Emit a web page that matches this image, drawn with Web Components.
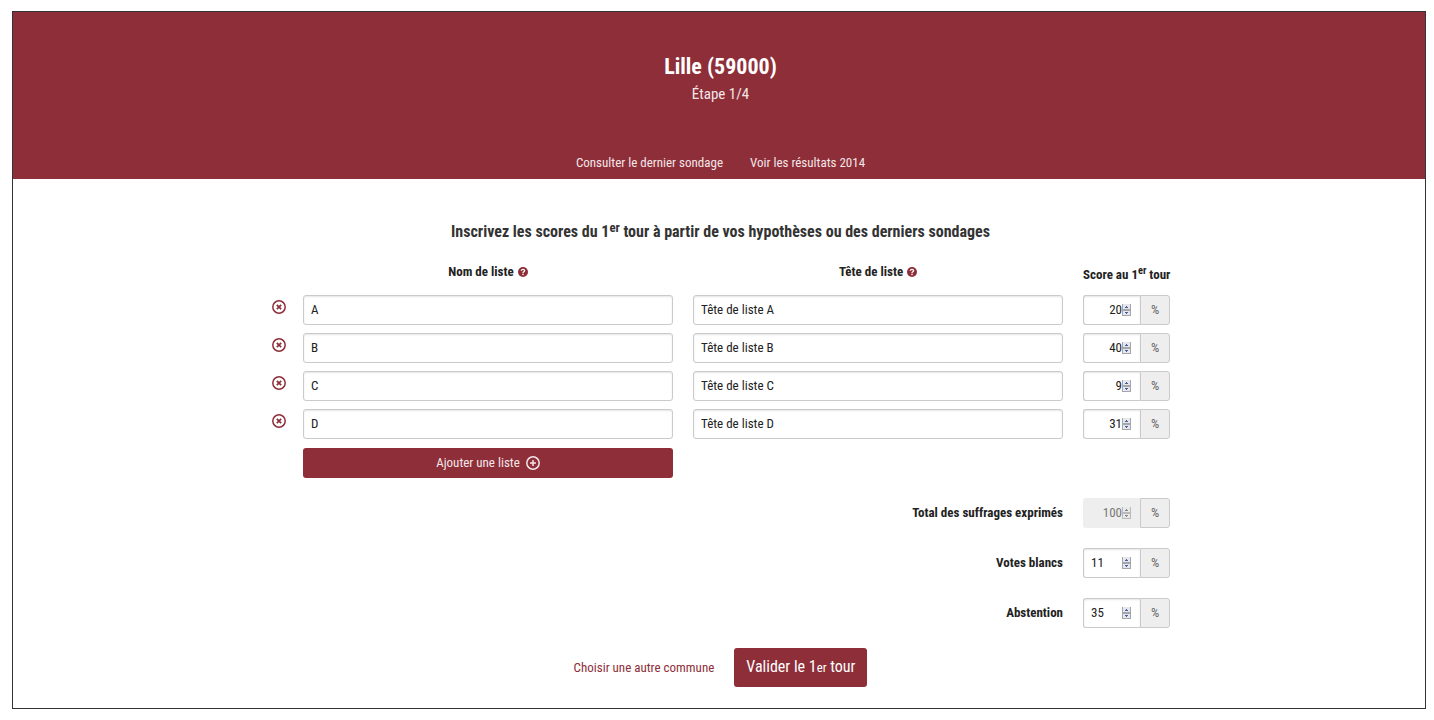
<!DOCTYPE html>
<html lang="fr">
<head>
<meta charset="utf-8">
<meta name="viewport" content="width=device-width, initial-scale=1">
<title>Lille (59000) - Étape 1/4</title>
<style>
  :root {
    --rouge: #8e2e39;
    --bordure: #cacaca;
  }
  body {
    margin: 11px 8px 11px 12px;
    background: #fff;
    color: #222;
    font-family: "Roboto Condensed", "Liberation Sans Narrow", Roboto, sans-serif;
    font-size: 13px;
    line-height: 20px;
  }
</style>
</head>
<body>
<app-simulateur>
  <app-entete slot="entete">
    <span slot="titre">Lille (59000)</span>
    <span slot="etape">Étape 1/4</span>
    <a slot="liens" href="#sondage">Consulter le dernier sondage</a>
    <a slot="liens" href="#resultats">Voir les résultats 2014</a>
  </app-entete>
  <app-formulaire></app-formulaire>
</app-simulateur>

<script>
// Crée le Shadow DOM à partir d'un gabarit HTML
function attacher(element, html) {
  const template = document.createElement('template');
  template.innerHTML = html;
  element.attachShadow({ mode: 'open' }).appendChild(template.content.cloneNode(true));
}

const base = `
  *, *::before, *::after { box-sizing: border-box; }
  input, button { font: inherit; color: inherit; margin: 0; }
  svg { display: block; }
  sup { font-size: 80%; line-height: 0; position: relative; top: -5px; vertical-align: baseline; }
`;

// Cadre général
class Simulateur extends HTMLElement {
  constructor() {
    super();
    attacher(this, `
      <style>
        ${base}
        :host { display: block; border: 1px solid #333; }
      </style>
      <slot name="entete"></slot>
      <main><slot></slot></main>
    `);
  }
}

class Entete extends HTMLElement {
  constructor() {
    super();
    attacher(this, `
      <style>
        ${base}
        :host { display: block; background: var(--rouge); color: #fefefe; }
        header {
          display: flex;
          flex-direction: column;
          align-items: center;
          padding: 40px 0 6px 3px;
        }
        h1 { margin: 0; font-size: 22px; line-height: 30px; }
        p { margin: 0; font-size: 15px; line-height: 24px; color: #f3e6e8; }
        nav { display: flex; gap: 27px; margin-top: 47px; }
        ::slotted(a) { color: #f3e6e8; text-decoration: none; }
      </style>
      <header>
        <h1><slot name="titre"></slot></h1>
        <p><slot name="etape"></slot></p>
        <nav><slot name="liens"></slot></nav>
      </header>
    `);
  }
}

// Pastille d'aide
class Aide extends HTMLElement {
  constructor() {
    super();
    attacher(this, `
      <style>
        :host { display: inline-block; width: 10px; height: 10px; color: var(--rouge); }
        svg { display: block; }
      </style>
      <svg width="10" height="10" viewBox="0 0 20 20" aria-hidden="true">
        <circle cx="10" cy="10" r="10" fill="currentColor"/>
        <path d="M6.6 7.6C6.6 3.6 13.4 3.8 13.2 7.5C13.1 9.6 10 9.6 10 12" fill="none" stroke="#fff" stroke-width="2.6"/>
        <rect x="8.6" y="13.4" width="2.8" height="2.8" fill="#fff"/>
      </svg>
    `);
  }
}

// Champ numérique suivi du signe %, avec un libellé facultatif
class Score extends HTMLElement {
  constructor() {
    super();
    const libelle = this.getAttribute('libelle');
    const bloque = this.hasAttribute('disabled');
    const visible = this.hasAttribute('visible');
    attacher(this, `
      <style>
        ${base}
        :host { display: flex; justify-content: flex-end; align-items: center; gap: 20px; }
        label { font-weight: bold; }
        .groupe { display: flex; width: 87px; height: 30px; }
        .champ {
          flex: 1;
          display: flex;
          align-items: center;
          min-width: 0;
          padding: 0 9px 0 7px;
          border: 1px solid var(--bordure);
          border-right: 0;
          border-radius: 3px 0 0 3px;
          background: #fff;
          box-shadow: inset 0 1px 2px rgba(10, 10, 10, 0.1);
        }
        input {
          flex: 1;
          min-width: 0;
          padding: 0;
          border: 0;
          outline: 0;
          background: none;
          text-align: right;
          appearance: textfield;
          -moz-appearance: textfield;
        }
        input::-webkit-inner-spin-button { appearance: none; -webkit-appearance: none; margin: 0; }
        :host([gauche]) input { text-align: left; }
        :host([disabled]) .champ { background: #eee; border-color: #eee; color: #777; box-shadow: none; }
        :host([disabled]) svg { filter: grayscale(1); opacity: 0.7; }
        .unite {
          width: 30px;
          border: 1px solid var(--bordure);
          border-radius: 0 3px 3px 0;
          background: #eee;
          color: #666;
          line-height: 28px;
          text-align: center;
        }
      </style>
      ${visible ? `<label for="valeur">${libelle}</label>` : ''}
      <div class="groupe">
        <div class="champ">
          <input id="valeur" type="number" value="${this.getAttribute('valeur')}"
            ${visible ? '' : `aria-label="${libelle}"`} ${bloque ? 'disabled' : ''}>
          <svg width="9" height="12" viewBox="0 0 9 12" shape-rendering="crispEdges" aria-hidden="true">
            <rect width="9" height="12" fill="#e6e7ea"/>
            <path d="M0 0H1V12H0ZM8 0H9V12H8ZM0 5H9V7H0ZM0 11H9V12H0Z" fill="#a3a6ab"/>
            <path d="M4 2H5V3H6V4H3V3H4ZM3 8H6V9H5V10H4V9H3Z" fill="#4a5da0"/>
          </svg>
        </div>
        <span class="unite">%</span>
      </div>
    `);
  }
}

// Une ligne de liste : suppression, nom, tête de liste, score
class Ligne extends HTMLElement {
  constructor() {
    super();
    const nom = this.getAttribute('nom');
    attacher(this, `
      <style>
        ${base}
        :host { display: grid; grid-template-columns: 32px minmax(0, 1fr); }
        button {
          justify-self: start;
          align-self: start;
          padding: 5px 1px;
          border: 0;
          background: none;
          color: var(--rouge);
          cursor: pointer;
        }
        .champs { display: grid; grid-template-columns: 1fr 1fr 87px; gap: 20px; }
        .texte {
          width: 100%;
          min-width: 0;
          height: 30px;
          padding: 0 7px 2px;
          border: 1px solid var(--bordure);
          border-radius: 3px;
          background: #fff;
          box-shadow: inset 0 1px 2px rgba(10, 10, 10, 0.1);
        }
      </style>
      <button type="button" aria-label="Supprimer la liste ${nom}">
        <svg width="14" height="14" viewBox="0 0 14 14" fill="none" stroke="currentColor" aria-hidden="true">
          <circle cx="7" cy="7" r="6.2" stroke-width="1.5"/>
          <path d="M4.8 4.8L9.2 9.2M9.2 4.8L4.8 9.2" stroke-width="1.7"/>
        </svg>
      </button>
      <div class="champs">
        <input class="texte" type="text" aria-label="Nom de liste" value="${nom}">
        <input class="texte" type="text" aria-label="Tête de liste" value="${this.getAttribute('tete')}">
        <app-score libelle="Score au 1er tour" valeur="${this.getAttribute('score')}"></app-score>
      </div>
    `);
  }
}

class Formulaire extends HTMLElement {
  constructor() {
    super();
    attacher(this, `
      <style>
        ${base}
        :host { display: block; padding: 41px 0 21px 3px; }
        form { max-width: 899px; margin: 0 auto; }
        h2 { margin: 0 0 18px; font-size: 16px; line-height: 24px; text-align: center; color: #333; }
        .colonnes {
          display: grid;
          grid-template-columns: 1fr 1fr 87px;
          column-gap: 20px;
          padding-left: 32px;
          height: 33px;
          font-weight: bold;
          text-align: center;
          white-space: nowrap;
        }
        .colonnes app-aide { vertical-align: -1px; margin-left: 1px; }
        .colonnes .score { padding-top: 3px; }
        .listes { display: grid; gap: 8px; }
        .ajout {
          display: grid;
          grid-template-columns: 1fr 1fr 87px;
          column-gap: 20px;
          padding: 9px 0 20px 32px;
        }
        button {
          border: 0;
          border-radius: 3px;
          background: var(--rouge);
          color: #fefefe;
          cursor: pointer;
        }
        .ajout button {
          display: flex;
          justify-content: center;
          align-items: center;
          gap: 6px;
          height: 30px;
          padding: 0;
          color: #f3e6e8;
        }
        .totaux { display: grid; gap: 20px; }
        .actions {
          display: flex;
          justify-content: center;
          align-items: center;
          gap: 20px;
          margin-top: 20px;
        }
        .actions a { color: var(--rouge); text-decoration: none; }
        .actions button { height: 39px; padding: 0 12px; font-size: 16px; }
        small { font-size: 80%; }
      </style>
      <form>
        <h2>Inscrivez les scores du 1<sup>er</sup> tour à partir de vos hypothèses ou des derniers sondages</h2>
        <div class="colonnes">
          <span>Nom de liste <app-aide></app-aide></span>
          <span>Tête de liste <app-aide></app-aide></span>
          <span class="score">Score au 1<sup>er</sup> tour</span>
        </div>
        <div class="listes">
          <app-ligne nom="A" tete="Tête de liste A" score="20"></app-ligne>
          <app-ligne nom="B" tete="Tête de liste B" score="40"></app-ligne>
          <app-ligne nom="C" tete="Tête de liste C" score="9"></app-ligne>
          <app-ligne nom="D" tete="Tête de liste D" score="31"></app-ligne>
        </div>
        <div class="ajout">
          <button type="button">Ajouter une liste
            <svg width="14" height="14" viewBox="0 0 14 14" fill="none" stroke="currentColor" aria-hidden="true">
              <circle cx="7" cy="7" r="6.2" stroke-width="1.5"/>
              <path d="M7 4V10M4 7H10" stroke-width="1.5"/>
            </svg>
          </button>
        </div>
        <div class="totaux">
          <app-score visible disabled libelle="Total des suffrages exprimés" valeur="100"></app-score>
          <app-score visible gauche libelle="Votes blancs" valeur="11"></app-score>
          <app-score visible gauche libelle="Abstention" valeur="35"></app-score>
        </div>
        <div class="actions">
          <a href="#communes">Choisir une autre commune</a>
          <button type="button">Valider le 1<small>er</small> tour</button>
        </div>
      </form>
    `);
  }
}

customElements.define('app-simulateur', Simulateur);
customElements.define('app-entete', Entete);
customElements.define('app-aide', Aide);
customElements.define('app-score', Score);
customElements.define('app-ligne', Ligne);
customElements.define('app-formulaire', Formulaire);
</script>
</body>
</html>
